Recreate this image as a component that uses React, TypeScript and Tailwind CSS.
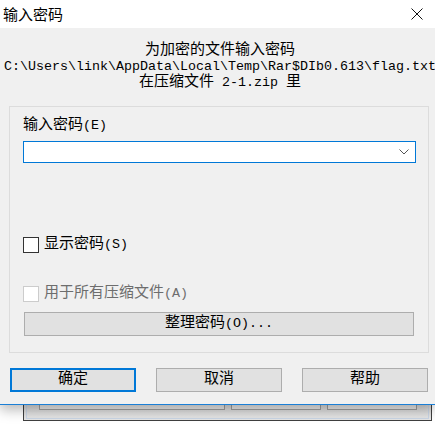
import React from "react";

const FONT = "[font-family:'Liberation_Mono','Noto_Sans_CJK_SC',monospace]";

// half-width latin part, matches the bitmap font's 8px cells
function Latin({ children }: { children: React.ReactNode }) {
  return <span className="text-[13.33px]">{children}</span>;
}

function CheckRow({ label, hotkey, disabled }: { label: string; hotkey: string; disabled?: boolean }) {
  return (
    <div className="flex items-center h-[16px] gap-[5px]">
      <div
        className={
          "w-[16px] h-[16px] bg-white border " +
          (disabled ? "border-[#cccccc]" : "border-[#333333]")
        }
      />
      <span className={"text-[15px] leading-[16px] " + (disabled ? "text-[#6d6d6d]" : "text-black")}>
        {label}
        <Latin>({hotkey})</Latin>
      </span>
    </div>
  );
}

function DialogButton({ label, primary }: { label: string; primary?: boolean }) {
  return (
    <button
      className={
        "w-[126px] h-[24px] bg-[#e1e1e1] text-[15px] leading-[20px] text-black flex items-center justify-center " +
        (primary ? "border-2 border-[#0078d7]" : "border border-[#adadad]")
      }
    >
      {label}
    </button>
  );
}

export default function App() {
  return (
    <div className={"w-[435px] h-[426px] overflow-hidden bg-white " + FONT}>
      {/* dialog */}
      <div className="relative z-10 bg-[#f0f0f0] border-b border-[#1b7fd6] shadow-[0_5px_12px_rgba(0,0,0,0.28)]">
        <div className="h-[28px] bg-white flex items-center justify-between pl-[3px] pr-[12px]">
          <span className="text-[15px] leading-[18px] text-black [font-family:'Noto_Sans_CJK_SC',sans-serif]">
            输入密码
          </span>
          <svg width="12" height="12" viewBox="0 0 12 12" className="mt-[-1px]">
            <path d="M0.5 0.5 L11.5 11.5 M11.5 0.5 L0.5 11.5" stroke="#111" strokeWidth="1" fill="none" />
          </svg>
        </div>

        <div className="pt-[15px] pl-[5px] text-center text-black">
          <div className="text-[15px] leading-[16px] whitespace-nowrap">为加密的文件输入密码</div>
          <div className="text-[13.33px] leading-[16px] whitespace-nowrap -mx-[10px]">
            C:\Users\link\AppData\Local\Temp\Rar$DIb0.613\flag.txt
          </div>
          <div className="text-[15px] leading-[16px] whitespace-nowrap">
            在压缩文件<Latin> 2-1.zip </Latin>里
          </div>
        </div>

        {/* group box */}
        <div className="mt-[15px] ml-[9px] mr-[6px] border border-[#dcdcdc] pl-[13px] pr-[12px] pt-[10px] pb-[16px]">
          <div className="h-[18px] text-[15px] leading-[18px] text-black">
            输入密码<Latin>(E)</Latin>
          </div>
          <div className="mt-[6px] h-[22px] bg-white border border-[#0078d7] flex items-center justify-end pr-[6px]">
            <svg width="10" height="6" viewBox="0 0 10 6">
              <polyline points="0.5,0.5 5,5 9.5,0.5" stroke="#555" strokeWidth="1" fill="none" />
            </svg>
          </div>

          <div className="mt-[74px]">
            <CheckRow label="显示密码" hotkey="S" />
          </div>
          <div className="mt-[33px]">
            <CheckRow label="用于所有压缩文件" hotkey="A" disabled />
          </div>

          <button className="mt-[10px] ml-[1px] w-[390px] h-[24px] bg-[#e1e1e1] border border-[#adadad] text-[15px] leading-[20px] text-black flex items-center justify-center">
            整理密码<Latin>(O)...</Latin>
          </button>
        </div>

        <div className="mt-[15px] pb-[12px] pl-[10px] flex gap-[20px]">
          <DialogButton label="确定" primary />
          <DialogButton label="取消" />
          <DialogButton label="帮助" />
        </div>
      </div>

      {/* window behind the dialog */}
      <div className="h-[20px] pl-[23px] pr-[3px]">
        <div className="h-[16px] border-x border-b border-[#3f3f3f] bg-gradient-to-b from-[#dadada] to-[#e6e6e6] px-[2px] pb-[1px]">
          <div className="h-full border-x border-b border-[#c9d5e5] flex gap-[6px] pl-[12px]">
            <div className="w-[186px] h-[5px] border-x border-b border-[#9f9f9f] bg-[#e9e9e9]" />
            <div className="w-[90px] h-[5px] border-x border-b border-[#9f9f9f] bg-[#e9e9e9]" />
            <div className="w-[90px] h-[5px] border-x border-b border-[#9f9f9f] bg-[#e9e9e9]" />
          </div>
        </div>
      </div>
    </div>
  );
}
